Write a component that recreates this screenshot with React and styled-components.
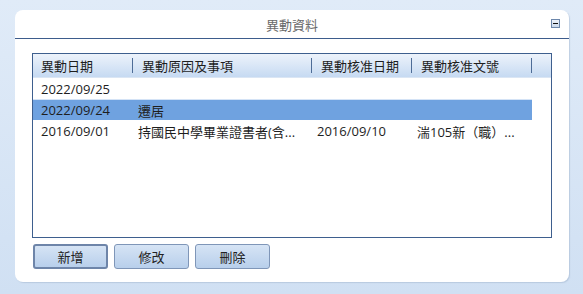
import React from 'react';
import styled, { createGlobalStyle } from 'styled-components';

// ================= style ======================= //
const GlobalStyle = createGlobalStyle`
    html, body {
        margin: 0;
        padding: 0;
    }
    body {
        width: 583px;
        height: 294px;
        overflow: hidden;
        background: linear-gradient(to bottom, #e0ebf8 0%, #d0e0f3 100%);
        font-family: "Open Sans", "Noto Sans CJK TC", sans-serif;
        font-size: 13px;
        color: #1e1e1e;
    }
`;

const Page = styled.div`
    padding: 10px 14px 12px 15px;
`;

const Card = styled.section`
    width: 554px;
    height: 272px;
    background: #fff;
    border-radius: 8px;
    box-shadow: 1px 1px 1px rgba(160, 180, 205, 0.5);
    display: flex;
    flex-direction: column;
`;

const CardHeader = styled.header`
    position: relative;
    height: 28px;
    border-bottom: 1px solid #3d5c8c;
    display: flex;
    align-items: center;
    justify-content: center;
    color: #6a6a6a;
    font-size: 13px;
`;

const Collapse = styled.button`
    position: absolute;
    right: 9px;
    top: 9px;
    width: 9px;
    height: 9px;
    padding: 0;
    border: 1px solid #6c87ab;
    background: linear-gradient(#eef3fa, #c9d8eb);
    display: flex;
    align-items: center;
    justify-content: center;
    &::after {
        content: "";
        width: 5px;
        height: 1px;
        background: #111;
    }
`;

const CardBody = styled.div`
    padding: 14px 17px 0 17px;
`;

const Grid = styled.div`
    width: 518px;
    height: 183px;
    border: 1px solid #3e5f8e;
    display: flex;
    flex-direction: column;
`;

const HeadRow = styled.div`
    display: grid;
    grid-template-columns: 100px 179px 100px 120px 1fr;
    height: 23px;
    border-bottom: 1px solid #dbe6f4;
    background: linear-gradient(to bottom, #edf3fb 0%, #c6daf2 100%);
`;

const HeadCell = styled.div`
    position: relative;
    display: flex;
    align-items: center;
    padding-left: ${(props) => props.first ? 8 : 9}px;
    white-space: nowrap;
    &::after {
        content: "";
        display: ${(props) => props.last ? 'none' : 'block'};
        position: absolute;
        right: 0;
        top: 4px;
        bottom: 4px;
        width: 1px;
        background: #4d6c97;
    }
`;

const Row = styled.div`
    display: grid;
    grid-template-columns: 100px 179px 100px 120px;
    width: 499px;
    height: 20px;
    border-top: 1px solid ${(props) => props.selected ? '#d4e3f6' : '#fff'};
    background: ${(props) => props.selected ? '#6fa2e0' : '#fff'};
`;

const Cell = styled.div`
    display: flex;
    align-items: center;
    padding-left: ${(props) => props.first ? 8 : 5}px;
    white-space: nowrap;
    overflow: hidden;
`;

const Actions = styled.div`
    display: flex;
    gap: 6px;
    padding: 6px 0 0 1px;
`;

const Button = styled.button`
    box-sizing: border-box;
    width: 75px;
    height: 25px;
    border-radius: 3px;
    border: ${(props) => props.active ? '2px solid #6e85a9' : '1px solid #7f96b8'};
    background: linear-gradient(to bottom, #d6e4f5 0%, #b8cfeb 100%);
    font-family: inherit;
    font-size: 13px;
    color: #222;
    padding: 0;
    cursor: pointer;
`;

const columns = ['異動日期', '異動原因及事項', '異動核准日期', '異動核准文號'];

const rows = [
    { date: '2022/09/25', reason: '', approved: '', doc: '' },
    { date: '2022/09/24', reason: '遷居', approved: '', doc: '', selected: true },
    { date: '2016/09/01', reason: '持國民中學畢業證書者(含...', approved: '2016/09/10', doc: '湍105新（職）...' },
];

export default function App() {
    return (
        <>
            <GlobalStyle />
            <Page>
                <Card>
                    <CardHeader>
                        異動資料
                        <Collapse aria-label="collapse" />
                    </CardHeader>
                    <CardBody>
                        <Grid>
                            <HeadRow>
                                {columns.map((c, i) => (
                                    <HeadCell first={i === 0} key={c}>{c}</HeadCell>
                                ))}
                                <HeadCell last />
                            </HeadRow>
                            {rows.map((r) => (
                                <Row selected={r.selected} key={r.date}>
                                    <Cell first>{r.date}</Cell>
                                    <Cell>{r.reason}</Cell>
                                    <Cell>{r.approved}</Cell>
                                    <Cell>{r.doc}</Cell>
                                </Row>
                            ))}
                        </Grid>
                        <Actions>
                            <Button active>新增</Button>
                            <Button>修改</Button>
                            <Button>刪除</Button>
                        </Actions>
                    </CardBody>
                </Card>
            </Page>
        </>
    );
}
